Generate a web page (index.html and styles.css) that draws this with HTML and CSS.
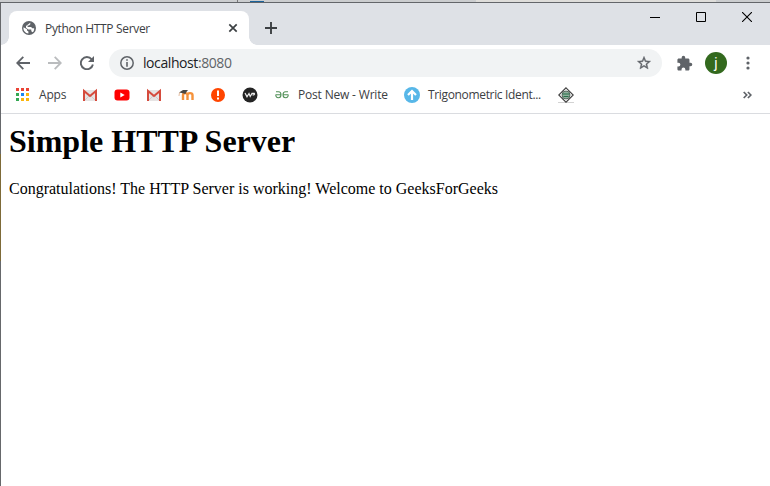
FILE: index.html
```
<!DOCTYPE html>
<html lang="en">
<head>
<meta charset="utf-8">
<title>Python HTTP Server</title>
<link rel="stylesheet" href="styles.css">
</head>
<body>
<div class="desktop"><i class="d1"></i><i class="d2"></i><i class="d3"></i><i class="d4"></i><i class="d5"></i></div>
<div class="window">
  <div class="edge"></div>
  <div class="browser">
    <header class="tabs">
      <div class="corner left"></div>
      <div class="tab">
        <svg class="globe" width="14" height="14" viewBox="0 0 14 14"><circle cx="7" cy="7" r="7" fill="#5f6368"/><path d="M1.500 6.200L5 8.300v1.300l1.400 1v1.800C3.500 12.300 1 9.700 1.500 6.200zM8.300 1.800v1.500L6.900 4.500H5.600v1.400h3.500l1.200 1.300h1.900C12.300 9.200 11.600 10.500 10.700 11.300L9.300 10.300V8.500H6.200L4 6.800V4.900L6.300 3.200z" fill="#fff"/></svg>
        <span class="tab-title">Python HTTP Server</span>
        <svg class="close" width="10" height="10" viewBox="0 0 10 10"><path d="M1.300 1.300l7.400 7.400M8.700 1.300L1.300 8.700" stroke="#3c4043" stroke-width="1.700"/></svg>
      </div>
      <div class="corner right"></div>
      <svg class="plus" width="12" height="12" viewBox="0 0 12 12"><path d="M6 0v12M0 6h12" stroke="#3c4043" stroke-width="1.900"/></svg>
      <div class="controls">
        <svg width="10" height="10" viewBox="0 0 10 10"><path d="M0 5.500h10" stroke="#000"/></svg>
        <svg width="10" height="10" viewBox="0 0 10 10"><path d="M.5.5h9v9h-9z" fill="none" stroke="#000"/></svg>
        <svg width="10" height="10" viewBox="0 0 10 10"><path d="M0 0l10 10M10 0L0 10" stroke="#000" stroke-width="1.100"/></svg>
      </div>
    </header>
    <div class="toolbar">
      <svg class="back" width="14" height="14" viewBox="0 0 14 14"><path d="M14 7H1.500M7.300 .8L1.200 7l6.100 6.200" fill="none" stroke="#5f6368" stroke-width="1.800"/></svg>
      <svg class="forward" width="14" height="14" viewBox="0 0 14 14"><path d="M0 7h12.500M6.700 .8L12.800 7l-6.100 6.200" fill="none" stroke="#babcbe" stroke-width="1.800"/></svg>
      <svg class="reload" width="14" height="14" viewBox="0 0 14 14"><path d="M11.700 3.300A6.100 6.100 0 1 0 12.900 8.500" fill="none" stroke="#5f6368" stroke-width="1.900"/><path d="M14 0v6H8z" fill="#5f6368"/></svg>
      <div class="address">
        <svg width="14" height="14" viewBox="0 0 14 14"><circle cx="7" cy="7" r="6.200" fill="none" stroke="#5f6368" stroke-width="1.500"/><path d="M7 3.200v1.600M7 6v4.700" stroke="#5f6368" stroke-width="1.600"/></svg>
        <span class="url">localhost<span>:8080</span></span>
        <svg class="star" width="16" height="16" viewBox="0 0 24 24"><path d="M22 9.240l-7.190-.62L12 2 9.190 8.630 2 9.240l5.460 4.730L5.820 21 12 17.270 18.180 21l-1.630-7.030zM12 15.400l-3.760 2.270 1-4.280-3.320-2.880 4.380-.38L12 6.100l1.710 4.040 4.380.38-3.320 2.880 1 4.280z" fill="#5f6368" stroke="#5f6368" stroke-width=".6"/></svg>
      </div>
      <svg class="puzzle" width="17" height="17" viewBox="0 0 24 24"><path d="M20.500 11H19V7c0-1.100-.9-2-2-2h-4V3.500a2.500 2.500 0 0 0-5 0V5H4c-1.100 0-2 .9-2 2v3.800h1.500a2.700 2.700 0 0 1 0 5.400H2V20c0 1.100.9 2 2 2h3.800v-1.500a2.700 2.700 0 0 1 5.400 0V22H17c1.100 0 2-.9 2-2v-4h1.500a2.500 2.500 0 0 0 0-5z" fill="#5f6368"/></svg>
      <span class="avatar">j</span>
      <svg class="menu" width="4" height="14" viewBox="0 0 4 14"><g fill="#5f6368"><circle cx="2" cy="2" r="1.600"/><circle cx="2" cy="7" r="1.600"/><circle cx="2" cy="12" r="1.600"/></g></svg>
    </div>
    <nav class="bookmarks">
      <span class="mark"><svg width="16" height="16" viewBox="0 0 16 16"><path d="M2 1h3v3H2zM7 1h3v3H7zM12 1h3v3h-3z" fill="#ea4335"/><path d="M2 6h3v3H2zM2 11h3v3H2z" fill="#34a853"/><path d="M7 6h3v3H7z" fill="#1a86f0"/><path d="M12 6h3v3h-3zM7 11h3v3H7zM12 11h3v3h-3z" fill="#fbb50b"/></svg><span class="apps">Apps</span></span>
      <svg width="16" height="16" viewBox="0 0 16 16"><path d="M1 3h14v11H1z" fill="#e6e4e4"/><path d="M3 13l5-5 5 5" fill="none" stroke="#cfcaca"/><path d="M2 14V4l6 5 6-5v10" fill="none" stroke="#d54b3d" stroke-width="2"/></svg>
      <svg width="16" height="16" viewBox="0 0 16 16"><rect x=".5" y="2.500" width="15" height="11" rx="3" fill="#f00"/><path d="M6.300 5.500v5l4.400-2.500z" fill="#fff"/></svg>
      <svg width="16" height="16" viewBox="0 0 16 16"><path d="M1 3h14v11H1z" fill="#e6e4e4"/><path d="M3 13l5-5 5 5" fill="none" stroke="#cfcaca"/><path d="M2 14V4l6 5 6-5v10" fill="none" stroke="#d54b3d" stroke-width="2"/></svg>
      <svg width="16" height="16" viewBox="0 0 16 16"><path d="M5 13V8c0-2.500 4.500-2.500 4.500 0V13M9.500 13V8c0-2.500 5-2.500 5 0V13" fill="none" stroke="#f6923b" stroke-width="2.400"/><path d="M1 5.500L5 3h5L8 5.500 7.500 7 3.800 6z" fill="#4b4844"/><path d="M1.500 5.500L1 9" stroke="#d9a27a" stroke-width=".7"/></svg>
      <svg width="16" height="16" viewBox="0 0 16 16"><circle cx="8" cy="8" r="7" fill="#ff4500"/><path d="M7 3.500h2V9H7zM7 10.500h2v2H7z" fill="#fff"/></svg>
      <svg width="16" height="16" viewBox="0 0 16 16"><circle cx="8" cy="8" r="7.500" fill="#242424"/><path d="M3 6l2 3.700L7 6.500l1.200 3L10 6.400h2.300c.8 1.300-.8 1.600-1.800 1.500" fill="none" stroke="#eee" stroke-width="1.200"/></svg>
      <span class="mark"><svg width="16" height="16" viewBox="0 0 16 16"><path d="M2 4.700h2.500c3.300 0 3.300 6 0 6C2 10.700 1.500 8.300 2 7.700h5.200M14 4.700h-2.500c-3.300 0-3.300 6 0 6 2.500 0 3-2.400 2.500-3H8.800" fill="none" stroke="#529158" stroke-width="1.100"/></svg><span class="post">Post New - Write</span></span>
      <span class="mark"><svg width="16" height="16" viewBox="0 0 16 16"><circle cx="8" cy="8" r="8" fill="#57b7e8"/><path d="M8 13V4.500M4 8l4-4 4 4" fill="none" stroke="#fff" stroke-width="2.200"/></svg><span class="trig">Trigonometric Ident...</span></span>
      <svg width="16" height="16" viewBox="0 0 16 16"><path d="M0 15.500h16" stroke="#d3d3d3"/><path d="M8 .8L15.200 8 8 15.200.8 8z" fill="#fff" stroke="#444" stroke-width="1.200"/><circle cx="8" cy="8" r="4" fill="#8fae9c" stroke="#596a60"/><path d="M4.500 7h7M5.500 9.500h5" stroke="#276f48" stroke-width="1.200"/></svg>
      <svg class="more" width="9" height="8" viewBox="0 0 9 8"><path d="M.7 1l3 3-3 3M4.900 1l3 3-3 3" fill="none" stroke="#5f6368" stroke-width="1.700"/></svg>
    </nav>
    <main>
      <h1>Simple HTTP Server</h1>
      <p>Congratulations! The HTTP Server is working! Welcome to GeeksForGeeks</p>
    </main>
  </div>
</div>
</body>
</html>
```
FILE: styles.css
```
* { box-sizing: border-box; }
body { margin: 0; width: 770px; height: 486px; overflow: hidden; background: #fff; font-family: "Open Sans", "Noto Sans", sans-serif; font-size: 12px; color: #3c4043; }
svg { display: block; flex: none; }
.desktop { display: flex; height: 2px; background: #cbcdcf; }
.d1 { width: 237px; }
.d2 { width: 1px; background: #777; }
.d3 { width: 12px; }
.d4 { width: 14px; background: linear-gradient(#cbcdcf 50%, #1b639b 50%); }
.d5 { width: 212px; }
.desktop::after { content: ""; width: 240px; background: #deddda; }
.window { display: flex; height: 484px; border-top: 1px solid #63666a; }
.edge { width: 1px; background: linear-gradient(#66686b 151px, #7d6a38 151px, #7d6a38 258px, #66686b 258px); }
.browser { flex: 1; min-width: 0; }
.tabs { display: flex; height: 42px; background: #dee1e6; padding-top: 8px; }
.corner { width: 8px; height: 34px; }
.left { background: radial-gradient(circle at 0 0, transparent 7.500px, #fff 8px) 0 26px / 8px 8px no-repeat; }
.right { background: radial-gradient(circle at 8px 0, transparent 7.500px, #fff 8px) 0 26px / 8px 8px no-repeat; }
.tab { display: flex; align-items: center; width: 240px; height: 34px; background: #fff; border-radius: 8px 8px 0 0; padding: 0 11px 0 13px; }
.tab-title { margin-left: 9px; white-space: nowrap; letter-spacing: -.33px; }
.close { margin-left: auto; }
.plus { margin: 11px 0 0 8px; }
.controls { display: flex; gap: 36px; margin: 1px 18px 0 auto; }
.toolbar { display: flex; align-items: center; height: 36px; padding-left: 15px; background: #fff; }
.forward { margin-left: 18px; }
.reload { margin-left: 18px; }
.address { display: flex; align-items: center; width: 553px; height: 28px; margin-left: 15px; padding: 0 10px 0 11px; border-radius: 14px; background: #f1f3f4; }
.url { margin-left: 9px; font-size: 14px; line-height: 18px; color: #202124; letter-spacing: -.42px; }
.url span { color: #5f6368; }
.star { margin-left: auto; }
.puzzle { margin-left: 14px; }
.avatar { display: flex; align-items: center; justify-content: center; width: 22px; height: 22px; margin-left: 12px; border-radius: 50%; background: #33691e; color: #fff; font: 14px/18px Roboto, sans-serif; }
.menu { margin-left: 19px; }
.bookmarks { display: flex; align-items: center; gap: 16px; height: 33px; padding: 0 18px 4px 13px; border-bottom: 1px solid #dadce0; background: #fff; }
.mark { display: flex; align-items: center; gap: 8px; white-space: nowrap; }
.mark span { line-height: 16px; }
.apps { width: 28px; letter-spacing: -.2px; text-indent: 1px; }
.post { width: 90px; letter-spacing: -.18px; }
.trig { width: 114px; letter-spacing: -.34px; }
.more { margin-left: auto; }
main { padding: 9px 8px; color: #000; font-family: "Liberation Serif", serif; font-size: 16px; }
h1 { margin: 0; font-size: 32px; line-height: 37px; }
p { margin: 20px 0 0; line-height: 18px; }
```
